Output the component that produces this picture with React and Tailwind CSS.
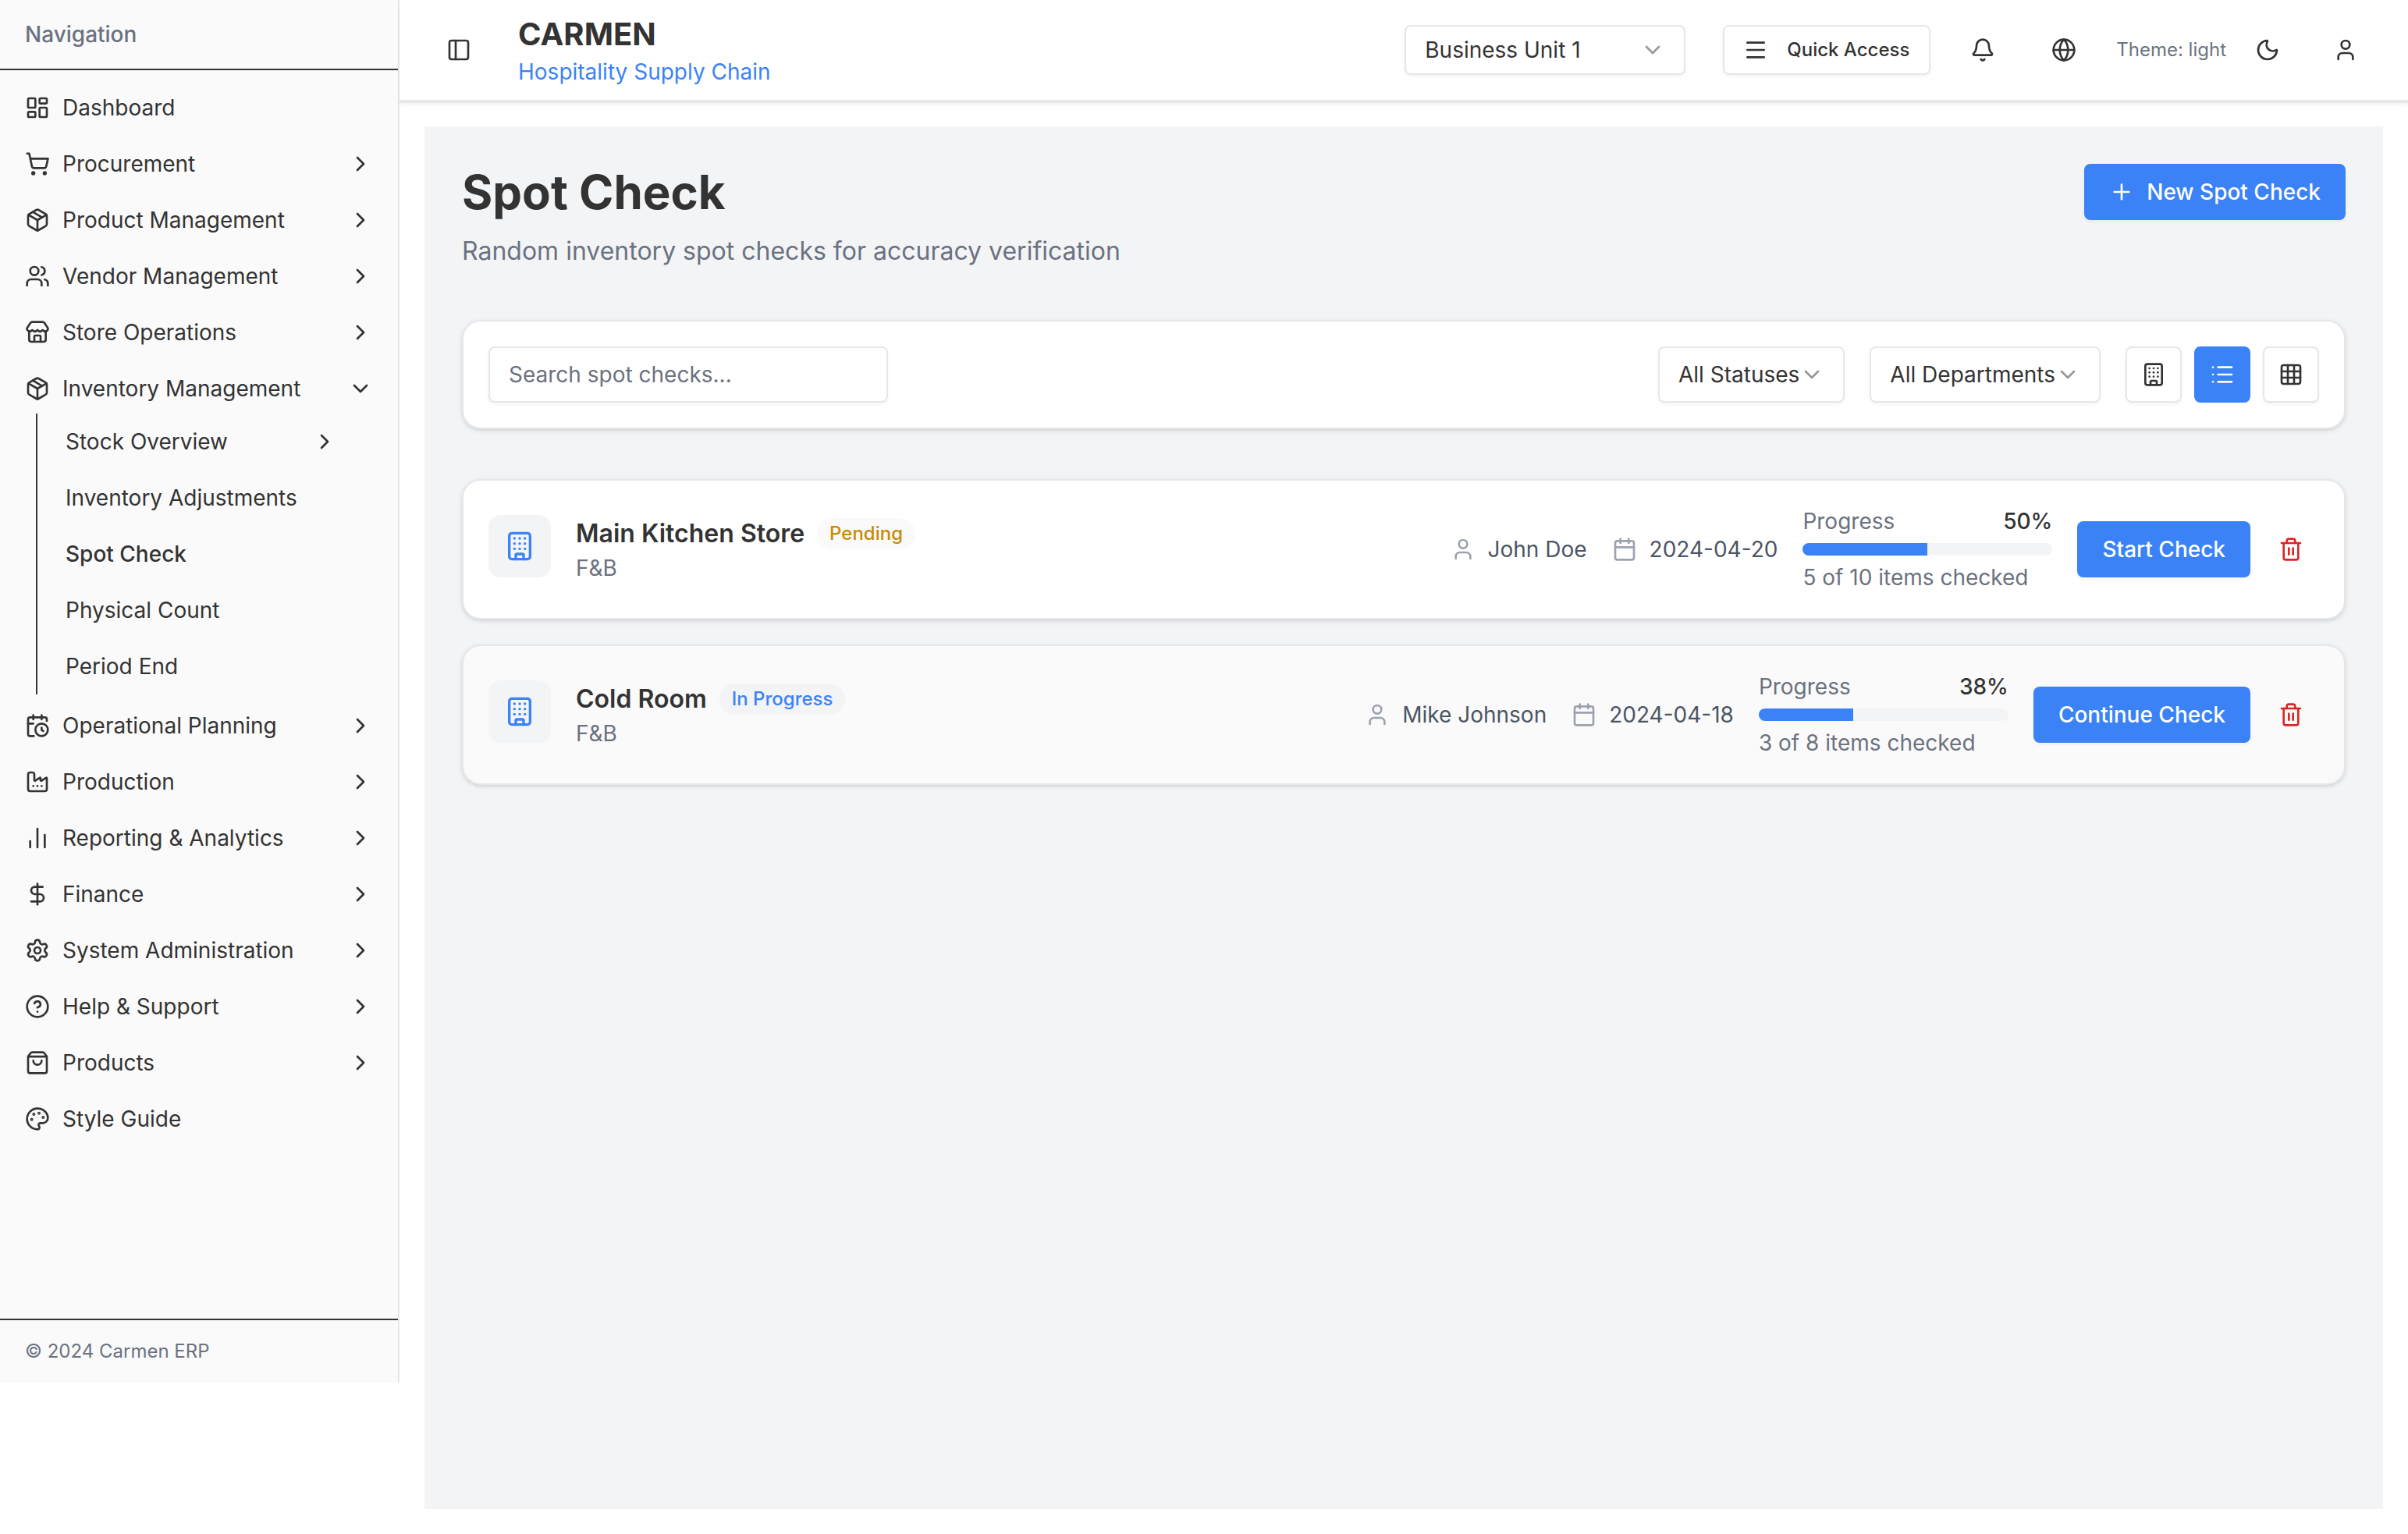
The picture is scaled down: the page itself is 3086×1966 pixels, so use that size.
import React from 'react';
import {
  LayoutDashboard, ShoppingCart, Package, Users, Store, CalendarClock, Factory,
  ChartNoAxesColumn, DollarSign, Settings, CircleHelp, ShoppingBag, Palette,
  ChevronRight, ChevronDown, PanelLeft, Menu, Bell, Globe, Moon, User, Plus,
  Building, List, Grid3x3, Calendar, Trash2,
} from 'lucide-react';

const topNav = [
  { label: 'Dashboard', icon: LayoutDashboard },
  { label: 'Procurement', icon: ShoppingCart, arrow: true },
  { label: 'Product Management', icon: Package, arrow: true },
  { label: 'Vendor Management', icon: Users, arrow: true },
  { label: 'Store Operations', icon: Store, arrow: true },
];

const bottomNav = [
  { label: 'Operational Planning', icon: CalendarClock, arrow: true },
  { label: 'Production', icon: Factory, arrow: true },
  { label: 'Reporting & Analytics', icon: ChartNoAxesColumn, arrow: true },
  { label: 'Finance', icon: DollarSign, arrow: true },
  { label: 'System Administration', icon: Settings, arrow: true },
  { label: 'Help & Support', icon: CircleHelp, arrow: true },
  { label: 'Products', icon: ShoppingBag, arrow: true },
  { label: 'Style Guide', icon: Palette },
];

const checks = [
  {
    name: 'Main Kitchen Store', status: 'Pending', statusColor: 'bg-[#fafafa] text-[#ca8a04]', user: 'John Doe',
    date: '2024-04-20', percent: 50, note: '5 of 10 items checked', action: 'Start Check', bg: 'bg-white',
  },
  {
    name: 'Cold Room', status: 'In Progress', statusColor: 'bg-[#f3f4f6] text-[#3b82f6]', user: 'Mike Johnson',
    date: '2024-04-18', percent: 38, note: '3 of 8 items checked', action: 'Continue Check', bg: 'bg-[#fafafa]',
  },
];

function NavItem({ label, icon: Icon, arrow, open }) {
  return (
    <div className="flex h-[72px] items-center justify-between pl-8 pr-[32px] text-[28px] text-[#333333]">
      <div className="flex items-center gap-4">
        <Icon size={32} />
        <span>{label}</span>
      </div>
      {open ? <ChevronDown size={32} /> : arrow && <ChevronRight size={32} />}
    </div>
  );
}

function Sidebar() {
  const sub = ['Inventory Adjustments', 'Spot Check', 'Physical Count', 'Period End'];
  return (
    <aside className="flex h-[1772px] w-[512px] shrink-0 flex-col border-r-2 border-[#e5e7eb] bg-[#fafafa]">
      <div className="flex h-[90px] items-center border-b-2 border-[#333333] px-8 text-[28px] font-medium text-[#6b7280]">
        Navigation
      </div>
      <nav className="flex-1 pt-3">
        {topNav.map((item) => <NavItem key={item.label} {...item} />)}
        <NavItem label="Inventory Management" icon={Package} open />
        <div className="ml-[46px] mb-1 -mt-1 border-l-2 border-[#333333] pl-9 text-[28px] text-[#333333]">
          <div className="flex h-[72px] items-center justify-between pr-[78px]">
            <span>Stock Overview</span>
            <ChevronRight size={32} />
          </div>
          {sub.map((label) => (
            <div key={label} className={`flex h-[72px] items-center ${label === 'Spot Check' ? 'font-medium' : ''}`}>
              {label}
            </div>
          ))}
        </div>
        {bottomNav.map((item) => <NavItem key={item.label} {...item} />)}
      </nav>
      <div className="flex h-[82px] items-center border-t-2 border-[#333333] px-8 text-2xl text-[#6b7280]">
        © 2024 Carmen ERP
      </div>
    </aside>
  );
}

function Topbar() {
  return (
    <header className="flex h-[132px] shrink-0 items-center justify-between border-b-4 border-[#e5e7eb] bg-white pl-[60px] pr-10 shadow-[0_2px_4px_rgba(0,0,0,0.05)]">
      <div className="flex items-center gap-[60px]">
        <PanelLeft size={32} className="text-[#333333]" />
        <div>
          <div className="text-[40px] leading-[56px] font-bold text-[#333333]">CARMEN</div>
          <div className="text-[28px] leading-10 text-[#3b82f6]">Hospitality Supply Chain</div>
        </div>
      </div>
      <div className="flex items-center">
        <div className="flex h-16 w-[360px] items-center justify-between rounded-lg border-2 border-[#e5e7eb] bg-white pl-6 pr-6 text-[28px] text-[#333333] shadow-[0_2px_4px_rgba(0,0,0,0.05)]">
          Business Unit 1
          <ChevronDown size={32} className="opacity-50" />
        </div>
        <div className="ml-12 flex h-16 w-[266px] items-center gap-6 rounded-lg border-2 border-[#e5e7eb] bg-white pl-6 text-2xl font-medium text-[#333333] shadow-[0_2px_4px_rgba(0,0,0,0.05)]">
          <Menu size={32} />
          Quick Access
        </div>
        <div className="ml-[27px] flex items-center gap-6 text-[#333333]">
          <div className="flex w-20 justify-center"><Bell size={32} /></div>
          <div className="flex w-20 justify-center"><Globe size={32} /></div>
        </div>
        <span className="ml-[27px] text-2xl text-[#6b7280]">Theme: light</span>
        <div className="ml-[13px] flex items-center gap-5 text-[#333333]">
          <div className="flex w-20 justify-center"><Moon size={32} /></div>
          <div className="flex w-20 justify-center"><User size={32} /></div>
        </div>
      </div>
    </header>
  );
}

function FilterSelect({ label }) {
  return (
    <div className="flex h-[72px] items-center rounded-lg border-2 border-[#e5e7eb] bg-white px-6 text-[28px] text-[#333333] shadow-[0_2px_4px_rgba(0,0,0,0.05)]">
      {label}
      <ChevronDown size={32} className="opacity-50" />
    </div>
  );
}

function ViewButton({ icon: Icon, active }) {
  const look = active
    ? 'border-[#3b82f6] bg-[#3b82f6] text-white'
    : 'border-[#e5e7eb] bg-white text-[#333333] shadow-[0_2px_4px_rgba(0,0,0,0.05)]';
  return (
    <div className={`flex h-[72px] w-[72px] items-center justify-center rounded-lg border-2 ${look}`}>
      <Icon size={32} />
    </div>
  );
}

function CheckCard({ check }) {
  return (
    <div className={`flex items-center justify-between rounded-3xl border-2 border-[#e5e7eb] p-8 shadow-[0_2px_6px_rgba(0,0,0,0.1),0_2px_4px_-2px_rgba(0,0,0,0.1)] ${check.bg}`}>
      <div className="flex items-start gap-8">
        <div className="flex h-20 w-20 items-center justify-center rounded-2xl bg-[#f3f4f6] text-[#3b82f6]">
          <Building size={40} />
        </div>
        <div>
          <div className="flex h-12 items-center gap-4">
            <span className="text-[32px] font-semibold text-[#333333]">{check.name}</span>
            <span className={`flex h-10 items-center rounded-full px-4 text-2xl font-medium ${check.statusColor}`}>
              {check.status}
            </span>
          </div>
          <div className="text-[28px] leading-10 text-[#6b7280]">F&amp;B</div>
        </div>
      </div>
      <div className="flex items-center">
        <div className="flex items-center gap-8 text-[28px] text-[#4b5563]">
          <div className="flex items-center gap-4">
            <User size={32} className="text-[#9ca3af]" />
            {check.user}
          </div>
          <div className="flex items-center gap-4">
            <Calendar size={32} className="text-[#9ca3af]" />
            {check.date}
          </div>
        </div>
        <div className="ml-8 w-[320px] text-[28px] leading-10 text-[#6b7280]">
          <div className="flex justify-between">
            <span>Progress</span>
            <span className="font-medium text-[#333333]">{check.percent}%</span>
          </div>
          <div className="my-2 h-4 overflow-hidden rounded-full bg-[#f3f4f6]">
            <div className="h-full bg-[#3b82f6]" style={{ width: `${check.percent}%` }} />
          </div>
          <div>{check.note}</div>
        </div>
        <div className="ml-8 flex h-[72px] items-center rounded-lg bg-[#3b82f6] px-8 text-[28px] font-medium text-white shadow-[0_2px_4px_rgba(0,0,0,0.05)]">
          {check.action}
        </div>
        <div className="ml-4 flex h-[72px] w-[72px] items-center justify-center text-[#dc2626]">
          <Trash2 size={32} />
        </div>
      </div>
    </div>
  );
}

export default function App() {
  return (
    <div className="flex h-[1966px] overflow-hidden bg-white font-['Inter',sans-serif]">
      <Sidebar />
      <div className="flex min-w-0 flex-1 flex-col">
        <Topbar />
        <main className="flex-1 px-8 pb-8 pt-[30px]">
          <div className="h-full bg-[#f3f4f6] p-12">
            <div className="flex items-start justify-between">
              <div>
                <h1 className="text-[60px] leading-[72px] font-bold text-[#333333]">Spot Check</h1>
                <p className="mt-4 text-[32px] leading-12 text-[#6b7280]">Random inventory spot checks for accuracy verification</p>
              </div>
              <div className="flex h-[72px] items-center gap-4 rounded-lg bg-[#3b82f6] px-8 text-[28px] font-medium text-white shadow-[0_2px_4px_rgba(0,0,0,0.05)]">
                <Plus size={32} />
                New Spot Check
              </div>
            </div>

            <div className="mt-16 flex items-center justify-between rounded-3xl border-2 border-[#e5e7eb] bg-white p-8 shadow-[0_2px_6px_rgba(0,0,0,0.1),0_2px_4px_-2px_rgba(0,0,0,0.1)]">
              <div className="flex h-[72px] w-[512px] items-center rounded-lg border-2 border-[#e5e7eb] bg-white px-6 text-[28px] text-[#6b7280] shadow-[0_2px_4px_rgba(0,0,0,0.05)]">
                Search spot checks...
              </div>
              <div className="flex items-center gap-4">
                <div className="mr-4 flex gap-8">
                  <FilterSelect label="All Statuses" />
                  <FilterSelect label="All Departments" />
                </div>
                <ViewButton icon={Building} />
                <ViewButton icon={List} active />
                <ViewButton icon={Grid3x3} />
              </div>
            </div>

            <div className="mt-16 flex flex-col gap-8">
              {checks.map((check) => <CheckCard key={check.name} check={check} />)}
            </div>
          </div>
        </main>
      </div>
    </div>
  );
}
